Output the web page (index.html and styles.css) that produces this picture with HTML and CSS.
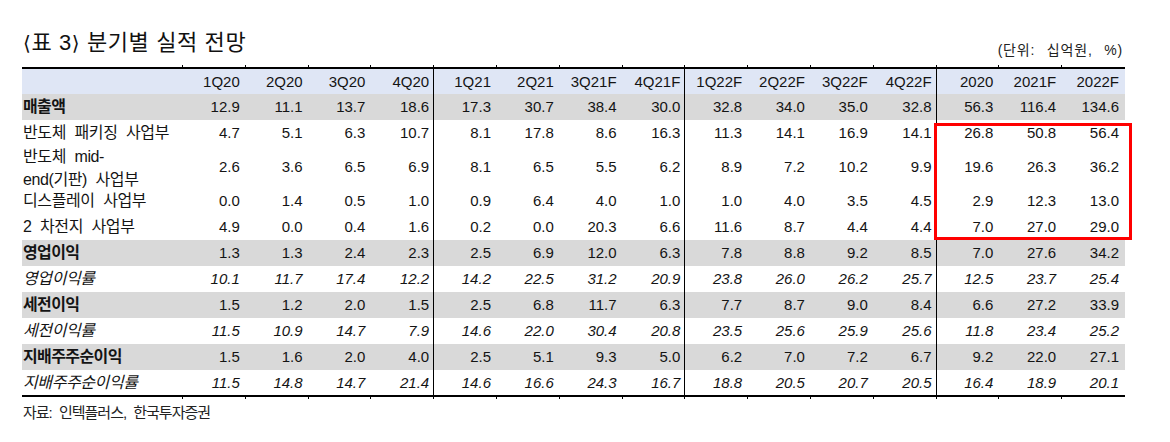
FILE: index.html
```html
<!DOCTYPE html>
<html lang="ko">
<head>
<meta charset="utf-8">
<title>분기별 실적 전망</title>
<link rel="stylesheet" href="styles.css">
</head>
<body>
<div class="page">
  <div class="titlebar">
    <h1 class="title"><span class="br">⟨</span>표 3<span class="br">⟩</span> 분기별 실적 전망</h1>
    <span class="unit">(단위: 십억원, %)</span>
  </div>
  <div class="wrap">
    <table class="data">
      <colgroup><col class="c-label"><col span="15"></colgroup>
      <tbody>
        <tr class="tick"><td></td><td></td><td></td><td></td><td></td><td></td><td></td><td></td><td></td><td></td><td></td><td></td><td></td><td></td><td></td><td></td></tr>
        <tr class="head"><th class="lbl"></th><th>1Q20</th><th>2Q20</th><th>3Q20</th><th>4Q20</th><th>1Q21</th><th>2Q21</th><th>3Q21F</th><th>4Q21F</th><th>1Q22F</th><th>2Q22F</th><th>3Q22F</th><th>4Q22F</th><th>2020</th><th>2021F</th><th>2022F</th></tr>
        <tr class="sum"><td class="lbl">매출액</td><td>12.9</td><td>11.1</td><td>13.7</td><td>18.6</td><td>17.3</td><td>30.7</td><td>38.4</td><td>30.0</td><td>32.8</td><td>34.0</td><td>35.0</td><td>32.8</td><td>56.3</td><td>116.4</td><td>134.6</td></tr>
        <tr><td class="lbl">반도체 패키징 사업부</td><td>4.7</td><td>5.1</td><td>6.3</td><td>10.7</td><td>8.1</td><td>17.8</td><td>8.6</td><td>16.3</td><td>11.3</td><td>14.1</td><td>16.9</td><td>14.1</td><td>26.8</td><td>50.8</td><td>56.4</td></tr>
        <tr class="tall"><td class="lbl"><div class="two">반도체 mid-<br>end(기판) 사업부</div></td><td>2.6</td><td>3.6</td><td>6.5</td><td>6.9</td><td>8.1</td><td>6.5</td><td>5.5</td><td>6.2</td><td>8.9</td><td>7.2</td><td>10.2</td><td>9.9</td><td>19.6</td><td>26.3</td><td>36.2</td></tr>
        <tr><td class="lbl">디스플레이 사업부</td><td>0.0</td><td>1.4</td><td>0.5</td><td>1.0</td><td>0.9</td><td>6.4</td><td>4.0</td><td>1.0</td><td>1.0</td><td>4.0</td><td>3.5</td><td>4.5</td><td>2.9</td><td>12.3</td><td>13.0</td></tr>
        <tr><td class="lbl">2 차전지 사업부</td><td>4.9</td><td>0.0</td><td>0.4</td><td>1.6</td><td>0.2</td><td>0.0</td><td>20.3</td><td>6.6</td><td>11.6</td><td>8.7</td><td>4.4</td><td>4.4</td><td>7.0</td><td>27.0</td><td>29.0</td></tr>
        <tr class="sum"><td class="lbl">영업이익</td><td>1.3</td><td>1.3</td><td>2.4</td><td>2.3</td><td>2.5</td><td>6.9</td><td>12.0</td><td>6.3</td><td>7.8</td><td>8.8</td><td>9.2</td><td>8.5</td><td>7.0</td><td>27.6</td><td>34.2</td></tr>
        <tr class="rate"><td class="lbl">영업이익률</td><td>10.1</td><td>11.7</td><td>17.4</td><td>12.2</td><td>14.2</td><td>22.5</td><td>31.2</td><td>20.9</td><td>23.8</td><td>26.0</td><td>26.2</td><td>25.7</td><td>12.5</td><td>23.7</td><td>25.4</td></tr>
        <tr class="sum"><td class="lbl">세전이익</td><td>1.5</td><td>1.2</td><td>2.0</td><td>1.5</td><td>2.5</td><td>6.8</td><td>11.7</td><td>6.3</td><td>7.7</td><td>8.7</td><td>9.0</td><td>8.4</td><td>6.6</td><td>27.2</td><td>33.9</td></tr>
        <tr class="rate"><td class="lbl">세전이익률</td><td>11.5</td><td>10.9</td><td>14.7</td><td>7.9</td><td>14.6</td><td>22.0</td><td>30.4</td><td>20.8</td><td>23.5</td><td>25.6</td><td>25.9</td><td>25.6</td><td>11.8</td><td>23.4</td><td>25.2</td></tr>
        <tr class="sum"><td class="lbl">지배주주순이익</td><td>1.5</td><td>1.6</td><td>2.0</td><td>4.0</td><td>2.5</td><td>5.1</td><td>9.3</td><td>5.0</td><td>6.2</td><td>7.0</td><td>7.2</td><td>6.7</td><td>9.2</td><td>22.0</td><td>27.1</td></tr>
        <tr class="rate last"><td class="lbl">지배주주순이익률</td><td>11.5</td><td>14.8</td><td>14.7</td><td>21.4</td><td>14.6</td><td>16.6</td><td>24.3</td><td>16.7</td><td>18.8</td><td>20.5</td><td>20.7</td><td>20.5</td><td>16.4</td><td>18.9</td><td>20.1</td></tr>
        <tr class="tick"><td></td><td></td><td></td><td></td><td></td><td></td><td></td><td></td><td></td><td></td><td></td><td></td><td></td><td></td><td></td><td></td></tr>
      </tbody>
    </table>
    <div class="highlight"></div>
  </div>
  <p class="source">자료: 인텍플러스, 한국투자증권</p>
</div>
</body>
</html>
```

FILE: styles.css
```css
html, body {
  margin: 0;
  padding: 0;
  background: #ffffff;
}

body {
  color: #141414;
  font-family: "Liberation Sans", "Noto Sans CJK KR", sans-serif;
}

.page {
  width: 1103px;
  padding: 0 45px 0 22px;
}

.titlebar {
  display: flex;
  justify-content: space-between;
  align-items: flex-start;
  height: 65px;
}

.title {
  margin: 30px 0 0 1px;
  font-size: 22px;
  line-height: 26px;
  letter-spacing: 0.6px;
  font-weight: normal;
  color: #111;
}

.title .br {
  font-family: "DejaVu Sans", sans-serif;
  font-size: 20px;
}

.unit {
  margin: 41px 2px 0 0;
  font-size: 14px;
  line-height: 18px;
  letter-spacing: 0.8px;
  word-spacing: 7px;
  color: #222;
}

.wrap {
  position: relative;
}

.data {
  width: 1103px;
  table-layout: fixed;
  border-collapse: separate;
  border-spacing: 0;
  font-size: 15px;
}

.data col.c-label {
  width: 161px;
}

.data th,
.data td {
  padding: 0 6px 0 0;
  text-align: right;
  font-weight: normal;
  line-height: 26px;
  white-space: nowrap;
}

.data .lbl {
  text-align: left;
  padding: 0 0 0 1px;
  font-size: 16px;
  letter-spacing: -0.4px;
  word-spacing: 4.5px;
}

.data tr.tick td {
  height: 2px;
  padding: 0;
  line-height: 0;
  font-size: 0;
  border-right: 1px solid #000;
}

.data tr.tick td:last-child {
  border-right: none;
}

.data tr.head th {
  background: #dfe6f5;
  border-top: 2px solid #000;
  line-height: 25px;
}

.data tr.sum td {
  background: #d9d9d9;
}

.data tr.sum td.lbl {
  font-weight: bold;
  letter-spacing: -0.6px;
}

.data tr.rate td {
  font-style: italic;
}

.data tr.last td {
  border-bottom: 2px solid #000;
  line-height: 25px;
}

.data tr.head th:nth-child(5),
.data tr.head th:nth-child(9),
.data tr.head th:nth-child(13),
.data tr:not(.tick) td:nth-child(5),
.data tr:not(.tick) td:nth-child(9),
.data tr:not(.tick) td:nth-child(13) {
  border-right: 1px solid #000;
  padding-right: 4px;
}

.data tr.tall td {
  line-height: 42px;
}

.data .two {
  line-height: 23px;
  margin: -1px 0 -3px;
}

.highlight {
  position: absolute;
  left: 912px;
  top: 58px;
  width: 198px;
  height: 117px;
  box-sizing: border-box;
  border: 3px solid #ff0000;
  pointer-events: none;
}

.source {
  margin: 4px 0 0 1px;
  font-size: 15px;
  line-height: 20px;
  letter-spacing: -1px;
  word-spacing: 4px;
  color: #222;
}
```
